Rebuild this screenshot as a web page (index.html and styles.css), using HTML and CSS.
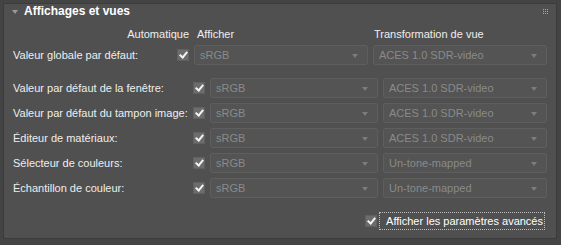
FILE: index.html
```html
<!DOCTYPE html>
<html lang="fr">
<head>
  <meta charset="UTF-8" />
  <title>Affichages et vues</title>
  <link rel="stylesheet" href="styles.css">
</head>
<body>
  <div class="panel">
    <div class="panel-head">
      <span class="caret"></span>
      <h2>Affichages et vues</h2>
      <span class="grip">
        <i></i><i></i><i></i><i></i><i></i><i></i><i></i><i></i><i></i>
      </span>
    </div>

    <div class="grid global">
      <div class="col-head auto">Automatique</div>
      <div class="col-head show">Afficher</div>
      <div class="col-head view">Transformation de vue</div>

      <div class="label">Valeur globale par défaut:</div>
      <span class="check"></span>
      <div class="select">sRGB</div>
      <div class="select">ACES 1.0 SDR-video</div>
    </div>

    <div class="grid rows">
      <div class="label">Valeur par défaut de la fenêtre:</div>
      <span class="check"></span>
      <div class="select">sRGB</div>
      <div class="select">ACES 1.0 SDR-video</div>

      <div class="label">Valeur par défaut du tampon image:</div>
      <span class="check"></span>
      <div class="select">sRGB</div>
      <div class="select">ACES 1.0 SDR-video</div>

      <div class="label">Éditeur de matériaux:</div>
      <span class="check"></span>
      <div class="select">sRGB</div>
      <div class="select">ACES 1.0 SDR-video</div>

      <div class="label">Sélecteur de couleurs:</div>
      <span class="check"></span>
      <div class="select">sRGB</div>
      <div class="select">Un-tone-mapped</div>

      <div class="label">Échantillon de couleur:</div>
      <span class="check"></span>
      <div class="select">sRGB</div>
      <div class="select">Un-tone-mapped</div>
    </div>

    <div class="advanced">
      <span class="check"></span>
      <span class="focus">Afficher les paramètres avancés</span>
    </div>
  </div>
</body>
</html>
```

FILE: styles.css
```css
body {
  margin: 0;
  background: #444444;
  font-family: 'Liberation Sans', Arial, sans-serif;
  font-size: 11px;
  color: #eeeeee;
}

.panel {
  margin: 3px 4px 0 3px;
  height: 236px;
  box-sizing: border-box;
  background: #505050;
  border: 1px solid #3b3b3b;
  border-radius: 2px;
}

.panel-head {
  display: flex;
  align-items: center;
  height: 14px;
  padding: 0 0 0 8px;
}

.caret {
  width: 0;
  height: 0;
  border-left: 3px solid transparent;
  border-right: 3px solid transparent;
  border-top: 4px solid #9a9a9a;
  margin-right: 6px;
  margin-top: 1px;
}

h2 {
  margin: 0;
  font-size: 12px;
  font-weight: bold;
  color: #ffffff;
  flex: 1;
}

.grip {
  display: grid;
  grid-template-columns: repeat(3, 1px);
  gap: 1px;
  margin-right: 8px;
  margin-top: 1px;
}

.grip i {
  width: 1px;
  height: 1px;
  background: #aaaaaa;
}

.grid {
  display: grid;
  column-gap: 5px;
  align-items: center;
  padding: 0 9px 0 9px;
}

.global {
  grid-template-columns: 1fr 12px 174px 174px;
  margin-top: 10px;
}

.rows {
  grid-template-columns: 1fr 12px 168px 164px;
  row-gap: 5px;
  margin-top: 13px;
}

.col-head {
  height: 14px;
  margin-bottom: 3px;
}

.auto {
  grid-column: 1 / 3;
  text-align: right;
}

.show {
  padding-left: 3px;
}

.view {
  padding-left: 1px;
}

.label {
  white-space: nowrap;
}

.check {
  position: relative;
  width: 12px;
  height: 12px;
  box-sizing: border-box;
  background: #6c6c6c;
  border: 1px solid #606060;
}

.check::after {
  content: "";
  position: absolute;
  left: 3px;
  top: 0;
  width: 3px;
  height: 6px;
  border-right: 2px solid #f4f4f4;
  border-bottom: 2px solid #f4f4f4;
  transform: rotate(40deg);
}

.select {
  position: relative;
  height: 20px;
  line-height: 18px;
  box-sizing: border-box;
  padding-left: 5px;
  background: #545454;
  border: 1px solid #5e5e5e;
  border-radius: 2px;
  color: #8a8a8a;
}

.select::after {
  content: "";
  position: absolute;
  right: 9px;
  top: 8px;
  border-left: 3px solid transparent;
  border-right: 3px solid transparent;
  border-top: 4px solid #7c7c7c;
}

.advanced {
  display: flex;
  justify-content: flex-end;
  align-items: center;
  gap: 2px;
  margin-top: 14px;
  padding-right: 11px;
}

.focus {
  border: 1px dotted #bdbdbd;
  padding: 2px 1px 2px 6px;
  color: #ffffff;
}
```
